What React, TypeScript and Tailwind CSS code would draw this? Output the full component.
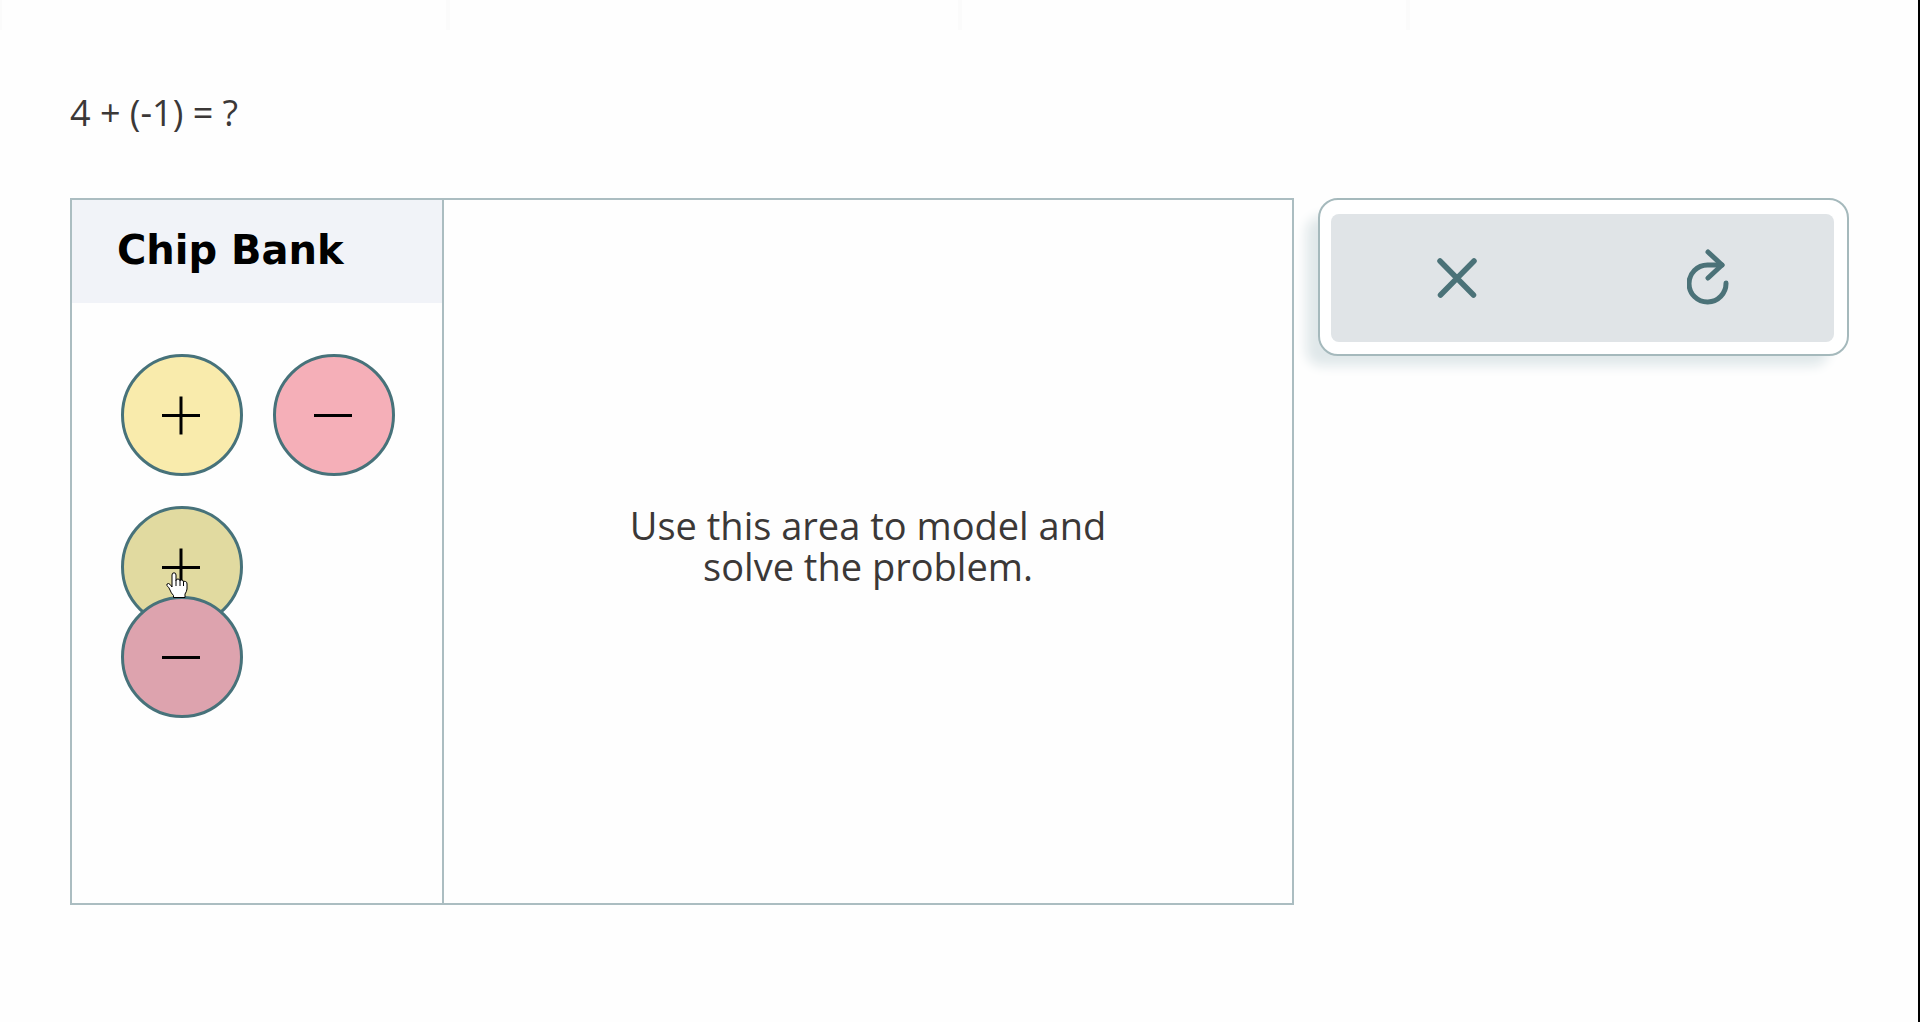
type ChipProps = {
  sign: "plus" | "minus";
  className: string;
};

const Chip = ({ sign, className }: ChipProps) => (
  <button
    type="button"
    aria-label={sign === "plus" ? "Positive chip" : "Negative chip"}
    className={`flex size-[122px] shrink-0 items-center justify-center rounded-full border-3 border-[#47727a] ${className}`}
  >
    <svg viewBox="0 0 40 40" className="size-10" stroke="#000" strokeWidth="3">
      <path d="M0 20.500H38" />
      {sign === "plus" && <path d="M19 1.500V39.500" />}
    </svg>
  </button>
);

const HandCursor = () => (
  <svg
    viewBox="0 0 22 26"
    className="pointer-events-none absolute top-[66px] left-[45px] z-10 h-[26px] w-[22px]"
    fill="#fff"
    stroke="#000"
    strokeWidth="1"
    strokeLinejoin="round"
  >
    <path d="M6 15V3Q6 .8 8 .8T10 3V8.500Q10 7 12 7T14 9Q14 7.800 15.800 8T17.500 10Q17.800 9 19.500 9.500T21 12V17Q20.500 20 19 22V25.500H7.500V23.500Q5 21 4 18Q3 15 .8 13.500Q.5 11.500 2.500 11.500Q4 11.700 6 15Z" />
    <path d="M10 8V14M14 9V14M17.500 10V14" fill="none" />
  </svg>
);

const Header = () => (
  <div className="flex h-[30px]">
    <div className="w-[450px] border-r-4 border-l-2 border-[#fbfbfb]" />
    <div className="w-[512px] border-r-4 border-[#fbfbfb]" />
    <div className="w-[448px] border-r-4 border-[#fbfbfb]" />
  </div>
);

const ChipBank = () => (
  <section className="w-[372px] shrink-0 border-r-2 border-[#abbdc1]">
    <h2 className="flex h-[103px] items-center bg-[#f1f3f8] pb-1 pl-[45px] font-['DejaVu_Sans',sans-serif] text-[40px] font-bold text-black">
      Chip Bank
    </h2>
    <div className="flex flex-col gap-[30px] pt-[51px] pl-[49px]">
      <div className="flex gap-[30px]">
        <Chip sign="plus" className="bg-[#f9ebac]" />
        <Chip sign="minus" className="bg-[#f5afb8]" />
      </div>
      <div className="relative flex flex-col">
        <Chip sign="plus" className="bg-[#e1daa0]" />
        <Chip sign="minus" className="-mt-8 bg-[#dda3ae]" />
        <HandCursor />
      </div>
    </div>
  </section>
);

const Toolbar = () => (
  <div className="w-[531px] shrink-0 rounded-[20px] border-2 border-[#a5b9bc] bg-white pt-[14px] pr-[13px] pb-3 pl-[11px] shadow-[-16px_14px_12px_-4px_#e0e8ea]">
    <div className="grid h-32 grid-cols-2 rounded-lg bg-[#e0e4e7]">
      <button type="button" aria-label="Clear" className="flex items-center justify-center">
        <svg
          viewBox="0 0 40 40"
          className="size-10"
          fill="none"
          stroke="#4b7278"
          strokeWidth="5.5"
          strokeLinecap="round"
        >
          <path d="M3 3L36.500 37M37 3L3.500 37" />
        </svg>
      </button>
      <button type="button" aria-label="Reset" className="flex items-center justify-center">
        <svg
          viewBox="0 0 42 58"
          className="h-[58px] w-[42px]"
          fill="none"
          stroke="#4b7278"
          strokeWidth="5"
          strokeLinecap="round"
          strokeLinejoin="round"
        >
          <path d="M39 34A18.500 18.500 0 1 1 20.500 16H35" />
          <path d="M21 3L35 16L21 29" />
        </svg>
      </button>
    </div>
  </div>
);

const App = () => {
  return (
    <main className="min-h-screen border-r-2 border-black bg-[#fefefe] font-['Open_Sans',sans-serif] text-[#3b3837]">
      <Header />
      <div className="pt-[54px] pr-[69px] pl-[70px]">
        <h1 className="text-4xl leading-[58px]">4 + (-1) = ?</h1>
        <div className="mt-14 flex items-start gap-6">
          <div className="flex min-h-[707px] flex-1 border-2 border-[#abbdc1]">
            <ChipBank />
            <section className="flex flex-1 items-center justify-center pb-3">
              <p className="max-w-[500px] text-center text-[38px] leading-[41px]">
                Use this area to model and solve the problem.
              </p>
            </section>
          </div>
          <Toolbar />
        </div>
      </div>
    </main>
  );
};

export default App;
